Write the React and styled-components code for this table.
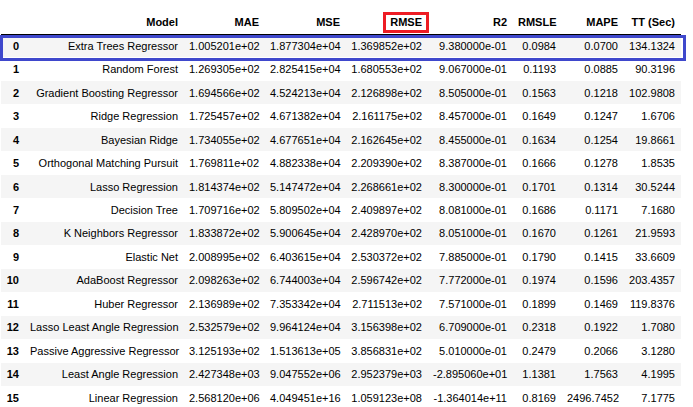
import React from 'react';
import styled, { createGlobalStyle } from 'styled-components';

const columns = ['Model', 'MAE', 'MSE', 'RMSE', 'R2', 'RMSLE', 'MAPE', 'TT (Sec)'];
const widths = [23.5, 159, 81, 81, 82, 85, 49, 62, 57];

const rows = [
    ['Extra Trees Regressor', '1.005201e+02', '1.877304e+04', '1.369852e+02', '9.380000e-01', '0.0984', '0.0700', '134.1324'],
    ['Random Forest', '1.269305e+02', '2.825415e+04', '1.680553e+02', '9.067000e-01', '0.1193', '0.0885', '90.3196'],
    ['Gradient Boosting Regressor', '1.694566e+02', '4.524213e+04', '2.126898e+02', '8.505000e-01', '0.1563', '0.1218', '102.9808'],
    ['Ridge Regression', '1.725457e+02', '4.671382e+04', '2.161175e+02', '8.457000e-01', '0.1649', '0.1247', '1.6706'],
    ['Bayesian Ridge', '1.734055e+02', '4.677651e+04', '2.162645e+02', '8.455000e-01', '0.1634', '0.1254', '19.8661'],
    ['Orthogonal Matching Pursuit', '1.769811e+02', '4.882338e+04', '2.209390e+02', '8.387000e-01', '0.1666', '0.1278', '1.8535'],
    ['Lasso Regression', '1.814374e+02', '5.147472e+04', '2.268661e+02', '8.300000e-01', '0.1701', '0.1314', '30.5244'],
    ['Decision Tree', '1.709716e+02', '5.809502e+04', '2.409897e+02', '8.081000e-01', '0.1686', '0.1171', '7.1680'],
    ['K Neighbors Regressor', '1.833872e+02', '5.900645e+04', '2.428970e+02', '8.051000e-01', '0.1670', '0.1261', '21.9593'],
    ['Elastic Net', '2.008995e+02', '6.403615e+04', '2.530372e+02', '7.885000e-01', '0.1790', '0.1415', '33.6609'],
    ['AdaBoost Regressor', '2.098263e+02', '6.744003e+04', '2.596742e+02', '7.772000e-01', '0.1974', '0.1596', '203.4357'],
    ['Huber Regressor', '2.136989e+02', '7.353342e+04', '2.711513e+02', '7.571000e-01', '0.1899', '0.1469', '119.8376'],
    ['Lasso Least Angle Regression', '2.532579e+02', '9.964124e+04', '3.156398e+02', '6.709000e-01', '0.2318', '0.1922', '1.7080'],
    ['Passive Aggressive Regressor', '3.125193e+02', '1.513613e+05', '3.856831e+02', '5.010000e-01', '0.2479', '0.2066', '3.1280'],
    ['Least Angle Regression', '2.427348e+03', '9.047552e+06', '2.952379e+03', '-2.895060e+01', '1.1381', '1.7563', '4.1995'],
    ['Linear Regression', '2.568120e+06', '4.049451e+16', '1.059123e+08', '-1.364014e+11', '0.8169', '2496.7452', '7.1775'],
];

export default function App() {
    return (
        <Wrap>
            <GlobalStyle />
            <Table>
                <colgroup>
                    {widths.map((w, i) => <col key={i} style={{ width: w }} />)}
                </colgroup>
                <thead>
                    <HeadRow>
                        <HeadCell />
                        {columns.map(c => <HeadCell key={c}>{c}</HeadCell>)}
                    </HeadRow>
                </thead>
                <tbody>
                    {rows.map((r, i) => (
                        <Row key={i}>
                            <IndexCell>{i}</IndexCell>
                            {r.map((v, j) => <Cell key={j}>{v}</Cell>)}
                        </Row>
                    ))}
                </tbody>
            </Table>
            {/* paint-style highlight marks */}
            <Mark $color="#ed1c24" $left={383} $top={12} $width={46} $height={21} />
            <Mark $color="#3f48cc" $left={0} $top={35} $width={686} $height={26} />
        </Wrap>
    );
}

const GlobalStyle = createGlobalStyle`
    html, body {
        margin: 0;
        padding: 0;
        background: #fff;
    }
    body {
        font-family: "Liberation Sans", Arial, sans-serif;
        overflow: hidden;
    }
`;
const Wrap = styled.div`
    position: relative;
    width: 693px;
    height: 407px;
    overflow: hidden;
    padding: 10px 0 0 1px;
    box-sizing: border-box;
`;
const Table = styled.table`
    border-collapse: collapse;
    table-layout: fixed;
    width: 679.5px;
    font-size: 11px;
    color: #000;
`;
const HeadRow = styled.tr`
    height: 24px;
    border-bottom: 1px solid #000;
`;
const HeadCell = styled.th`
    padding: 0 5.5px;
    text-align: right;
    vertical-align: middle;
    font-weight: bold;
    white-space: nowrap;
`;
const Row = styled.tr`
    height: 23.47px;
    &:nth-child(odd) {
        background: #f5f5f5;
    }
`;
const IndexCell = styled.th`
    padding: 0 5.5px;
    text-align: right;
    font-weight: bold;
    white-space: nowrap;
`;
const Cell = styled.td`
    padding: 0 5.5px;
    text-align: right;
    white-space: nowrap;
`;
const Mark = styled.div`
    position: absolute;
    left: ${p => p.$left}px;
    top: ${p => p.$top}px;
    width: ${p => p.$width}px;
    height: ${p => p.$height}px;
    border: 3px solid ${p => p.$color};
    box-sizing: border-box;
    pointer-events: none;
`;
